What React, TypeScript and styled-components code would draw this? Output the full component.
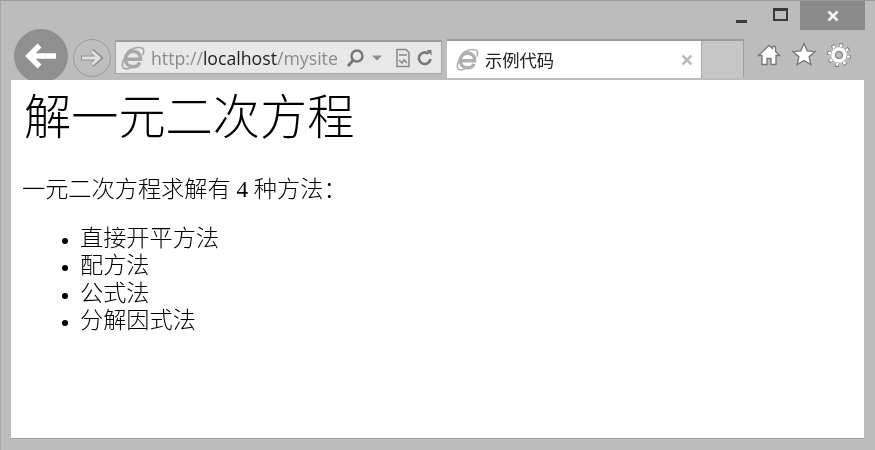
import React from "react";
import styled, { createGlobalStyle } from "styled-components";

const GlobalStyle = createGlobalStyle`
  html, body {
    margin: 0;
    padding: 0;
    background: #bcbcbc;
  }
`;

const Window = styled.div`
  width: 875px;
  height: 450px;
  box-sizing: border-box;
  display: flex;
  flex-direction: column;
  overflow: hidden;
  background: #bcbcbc;
  border-top: 1px solid #9a9a9a;
  border-left: 1px solid #a6a6a6;
  filter: blur(0.35px);
`;

const TitleBar = styled.div`
  height: 29px;
  flex: none;
  display: flex;
  justify-content: flex-end;
  padding-right: 10px;
`;

const WinButton = styled.div<{ $close?: boolean }>`
  width: ${(p) => (p.$close ? "65px" : "37px")};
  display: flex;
  align-items: center;
  justify-content: center;
  background: ${(p) => (p.$close ? "#8b8b8b" : "transparent")};
`;

const MinGlyph = styled.div`
  width: 11px;
  height: 3px;
  margin: 11px 6px 0 0;
  background: #3e3e3e;
`;

const MaxGlyph = styled.div`
  width: 11px;
  height: 8px;
  border: 2px solid #3a3a3a;
  border-top-width: 3px;
  margin: -3px 3px 0 0;
`;

const Toolbar = styled.div`
  height: 50px;
  flex: none;
  display: flex;
  align-items: flex-start;
  padding-left: 13px;
  position: relative;
`;

const BackButton = styled.div`
  width: 54px;
  height: 54px;
  flex: none;
  margin-top: -1px;
  border-radius: 50%;
  background: #8f8f8f;
  display: flex;
  align-items: center;
  justify-content: center;
`;

const ForwardButton = styled.div`
  width: 36px;
  height: 36px;
  flex: none;
  margin: 9px 0 0 5px;
  border-radius: 50%;
  border: 1px solid #9a9a9a;
  background: #bebebe;
  display: flex;
  align-items: center;
  justify-content: center;
`;

const AddressBar = styled.div`
  width: 327px;
  height: 34px;
  flex: none;
  box-sizing: border-box;
  margin: 10px 0 0 4px;
  padding-left: 5px;
  display: flex;
  align-items: center;
  background: #e8e8e8;
  border: 1px solid #a4a4a4;
  border-top: 2px solid #9a9a9a;
`;

const Url = styled.div`
  margin-left: 6px;
  width: 192px;
  flex: none;
  font: 17.7px "Open Sans", sans-serif;
  color: #8a8a8a;
  white-space: nowrap;
  overflow: hidden;
  b {
    font-weight: 400;
    color: #222;
  }
`;

const AddressTools = styled.div`
  display: flex;
  align-items: center;
  gap: 6px;
  margin-left: 2px;
`;

const TabStrip = styled.div`
  display: flex;
  flex: none;
  height: 39px;
  margin: 9px 0 0 5px;
  border-top: 2px solid #9a9a9a;
  box-sizing: border-box;
`;

const Tab = styled.div`
  width: 254px;
  background: #fff;
  display: flex;
  align-items: center;
  box-sizing: border-box;
  padding: 0 8px 0 9px;
`;

const TabTitle = styled.div`
  flex: 1;
  margin-left: 6px;
  font: 17.3px "Noto Sans CJK SC", sans-serif;
  color: #222;
`;

const NewTab = styled.div`
  width: 41px;
  background: #c6c6c6;
  border-left: 1px solid #a8a8a8;
  border-right: 1px solid #a0a0a0;
`;

const ToolIcons = styled.div`
  display: flex;
  align-items: center;
  gap: 10px;
  margin: 12px 0 0 13px;
`;

const Page = styled.main`
  flex: 1;
  margin: 0 11px 11px 10px;
  padding: 0 0 0 11px;
  background: #fff;
  border-bottom: 1px solid #a2a2a2;
  position: relative;
  font-family: "Liberation Serif", "Noto Sans CJK SC", serif;
  font-weight: 300;
  color: #000;
  overflow: hidden;
`;

const Heading = styled.h1`
  margin: 7px 0 0 2px;
  font-size: 47.2px;
  line-height: 62px;
  font-weight: 300;
  white-space: nowrap;
`;

const Intro = styled.p`
  margin: 25px 0 0;
  font-size: 23.2px;
  line-height: 30px;
  white-space: nowrap;
`;

const Methods = styled.ul`
  margin: 21px 0 0;
  padding: 0 0 0 58px;
  font-size: 23.2px;
  line-height: 27.3px;
  li::marker {
    font-size: 19px;
  }
`;

function IeLogo({ size, colour }: { size: number; colour: string }) {
  return (
    <svg width={size} height={size} viewBox="0 0 24 24" fill="none">
      <path d="M5 13.2h14.500c.3-4.600-3-8-7.300-8-4.500 0-7.700 3.400-7.700 7.800 0 4.500 3.200 7.700 7.500 7.700 3.100 0 5.700-1.600 6.800-4.200" stroke={colour} strokeWidth="3.600" />
      <path d="M6 6.500C9 3 16 .5 21 2c2.500 1 2 4.500.5 7M4 11C1.500 15.500.5 20 2.500 22c2 1.500 6 .5 9-1.500" stroke={colour} strokeWidth="1.600" />
    </svg>
  );
}

function App() {
  return (
    <>
      <GlobalStyle />
      <Window>
        <TitleBar>
          <WinButton><MinGlyph /></WinButton>
          <WinButton><MaxGlyph /></WinButton>
          <WinButton $close>
            <svg width="12" height="12" viewBox="0 0 12 12">
              <path d="M1.500 1.500l9 9M10.500 1.500l-9 9" stroke="#f4f4f4" strokeWidth="2.600" />
            </svg>
          </WinButton>
        </TitleBar>
        <Toolbar>
          <BackButton>
            <svg width="34" height="28" viewBox="0 0 34 28" fill="none">
              <path d="M32 14H6M15.500 3.500L5 14l10.500 10.500" stroke="#fff" strokeWidth="5.500" />
            </svg>
          </BackButton>
          <ForwardButton>
            <svg width="26" height="22" viewBox="0 0 26 22" fill="none">
              <path d="M2 11h18M13 4l8 7-8 7" stroke="#8f8f8f" strokeWidth="5" />
              <path d="M3 11h16M13 4.500l7 6.500-7 6.500" stroke="#e0e0e0" strokeWidth="3" />
            </svg>
          </ForwardButton>
          <AddressBar>
            <IeLogo size={24} colour="#a8a8a8" />
            <Url>http://<b>localhost</b>/mysite</Url>
            <AddressTools>
              <svg width="20" height="20" viewBox="0 0 20 20" fill="none">
                <circle cx="12" cy="8" r="5.500" stroke="#777" strokeWidth="2.400" />
                <path d="M8 12.500L3 18" stroke="#777" strokeWidth="3" />
              </svg>
              <svg width="12" height="8" viewBox="0 0 12 8">
                <path d="M1 1.500h10L6 6.500z" fill="#8c8c8c" />
              </svg>
              <svg width="16" height="20" viewBox="0 0 16 20" fill="none" style={{ marginLeft: 6 }}>
                <path d="M2 1.500h9l3 3v14H2z" stroke="#888" strokeWidth="1.500" />
                <path d="M4 12l3 3 2-3 3 3M4 7h8" stroke="#888" strokeWidth="1.500" />
              </svg>
              <svg width="16" height="18" viewBox="0 0 16 18" fill="none">
                <path d="M13.500 10a5.800 5.800 0 1 1-2-5.200" stroke="#777" strokeWidth="2.600" />
                <path d="M9.500 1l5 0 0 5.500z" fill="#777" />
              </svg>
            </AddressTools>
          </AddressBar>
          <TabStrip>
            <Tab>
              <IeLogo size={23} colour="#b0b0b0" />
              <TabTitle>示例代码</TabTitle>
              <svg width="12" height="12" viewBox="0 0 12 12">
                <path d="M1.500 1.500l9 9M10.500 1.500l-9 9" stroke="#bdbdbd" strokeWidth="2.600" />
              </svg>
            </Tab>
            <NewTab />
          </TabStrip>
          <ToolIcons>
            <svg width="24" height="24" viewBox="0 0 24 24">
              <path d="M12 2.500L1.500 12.500h3.500v9h5v-6h4v6h5v-9h3.500L18.500 8.500V3.500h-3v2z" fill="#fff" stroke="#777" strokeWidth="1.300" />
            </svg>
            <svg width="26" height="25" viewBox="0 0 24 24">
              <path d="M12 1.500l3.100 7 7.400.7-5.600 5 1.700 7.500L12 17.800 5.400 21.700l1.700-7.500-5.600-5 7.400-.7z" fill="#fff" stroke="#777" strokeWidth="1.300" />
            </svg>
            <svg width="24" height="24" viewBox="0 0 24 24" fill="none">
              <circle cx="12" cy="12" r="9.500" stroke="#777" strokeWidth="5" strokeDasharray="3.500 3.960" />
              <circle cx="12" cy="12" r="9.500" stroke="#fff" strokeWidth="3" strokeDasharray="2.500 4.960" strokeDashoffset="-.5" />
              <circle cx="12" cy="12" r="6" stroke="#fff" strokeWidth="3.500" />
              <circle cx="12" cy="12" r="3.500" stroke="#777" strokeWidth="1" />
            </svg>
          </ToolIcons>
        </Toolbar>
        <Page>
          <Heading>解一元二次方程</Heading>
          <Intro>一元二次方程求解有 4 种方法：</Intro>
          <Methods>
            <li>直接开平方法</li>
            <li>配方法</li>
            <li>公式法</li>
            <li>分解因式法</li>
          </Methods>
        </Page>
      </Window>
    </>
  );
}

export default App;
